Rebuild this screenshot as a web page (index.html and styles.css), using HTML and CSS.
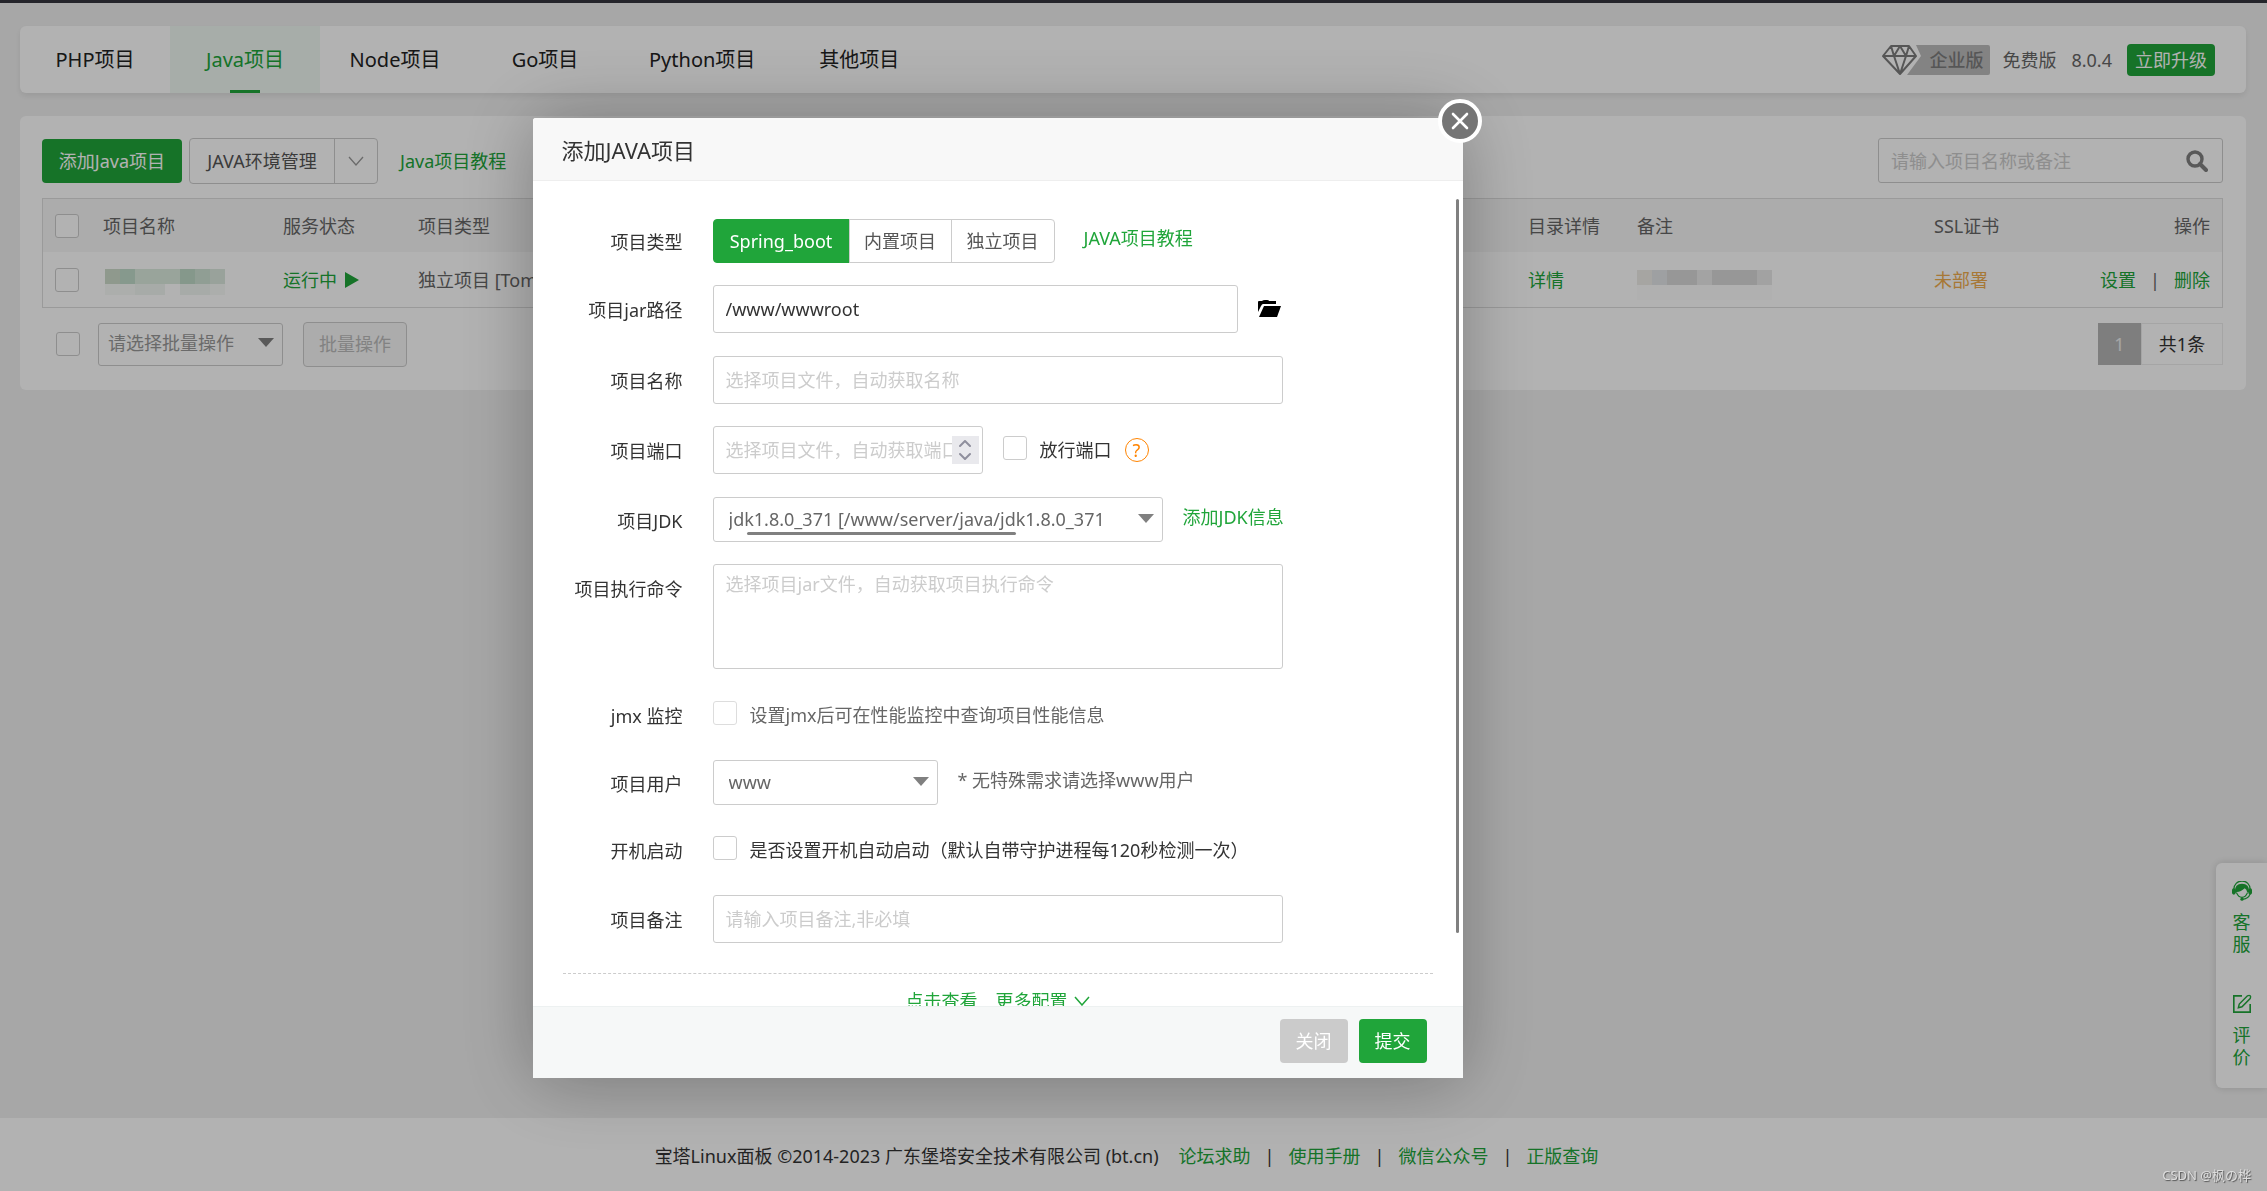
FILE: index.html
```html
<!DOCTYPE html>
<html lang="zh-CN">
<head>
<meta charset="utf-8">
<title>Java项目</title>
<link rel="stylesheet" href="styles.css">
</head>
<body>
<div class="page">
  <header class="tabbar">
    <nav class="tabs">
      <a class="tab" href="#">PHP项目</a>
      <a class="tab tab-active" href="#">Java项目</a>
      <a class="tab" href="#">Node项目</a>
      <a class="tab" href="#">Go项目</a>
      <a class="tab" href="#">Python项目</a>
      <a class="tab" href="#">其他项目</a>
    </nav>
    <div class="version">
      <span class="edition">
        <svg class="edition-shape" viewBox="0 0 110 32" aria-hidden="true">
          <path d="M35 1H107Q109 1 109 3V29Q109 31 107 31H26L40 12Z" fill="#bcbcbc"/>
          <path d="M10 2H28L35 12L19 30L2 12ZM2 12H35M10 2L13 12L19 30L25 12L28 2M13 12L19 2L25 12" fill="none" stroke="#7c7c7c" stroke-width="2" stroke-linejoin="round"/>
        </svg>
        <span class="edition-text">企业版</span>
      </span>
      <span>免费版</span>
      <span>8.0.4</span>
      <button class="btn-upgrade" type="button">立即升级</button>
    </div>
  </header>

  <main class="panel">
    <div class="toolbar">
      <button class="btn btn-green btn-add" type="button">添加Java项目</button>
      <div class="split">
        <button class="split-main" type="button">JAVA环境管理</button>
        <button class="split-arrow" type="button" aria-label="展开">
          <svg width="16" height="10" viewBox="0 0 16 10"><path d="M1 1L8 9L15 1" fill="none" stroke="#999" stroke-width="1.3"/></svg>
        </button>
      </div>
      <a class="link" href="#">Java项目教程</a>
      <div class="search">
        <input type="text" placeholder="请输入项目名称或备注" aria-label="搜索">
        <svg width="22" height="22" viewBox="0 0 22 22" aria-hidden="true"><circle cx="9" cy="9" r="7" fill="none" stroke="#808080" stroke-width="3.4"/><path d="M14 14L20 20" stroke="#808080" stroke-width="4" stroke-linecap="round"/></svg>
      </div>
    </div>

    <table class="projects">
      <colgroup><col class="c-check"><col class="c-name"><col class="c-status"><col class="c-type"><col class="c-dir"><col class="c-note"><col class="c-ssl"><col class="c-op"></colgroup>
      <thead>
        <tr>
          <th><input type="checkbox" aria-label="全选"></th>
          <th>项目名称</th><th>服务状态</th><th>项目类型</th><th>目录详情</th><th>备注</th><th>SSL证书</th><th class="right">操作</th>
        </tr>
      </thead>
      <tbody>
        <tr>
          <td><input type="checkbox" aria-label="选择项目"></td>
          <td><span class="mosaic mosaic-name"></span></td>
          <td><a class="link status" href="#">运行中 <span class="play"></span></a></td>
          <td>独立项目 [Tomcat]</td>
          <td><a class="link" href="#">详情</a></td>
          <td><span class="mosaic mosaic-note"></span></td>
          <td><a class="warn" href="#">未部署</a></td>
          <td class="right"><span class="ops"><a class="link" href="#">设置</a><span>|</span><a class="link" href="#">删除</a></span></td>
        </tr>
      </tbody>
    </table>

    <div class="batch">
      <input type="checkbox" aria-label="批量选择">
      <div class="select-wrap batch-select">
        <select aria-label="批量操作"><option>请选择批量操作</option></select>
      </div>
      <button class="btn-batch" type="button" disabled>批量操作</button>
      <div class="pager"><span class="pager-now">1</span><span class="pager-total">共1条</span></div>
    </div>
  </main>

  <aside class="service">
    <a href="#">
      <svg width="20" height="20" viewBox="0 0 22 22"><path d="M2 9A9 9 0 0 1 20 9" fill="none" stroke="#20a53a" stroke-width="1.4"/><path d="M3 12Q3 3 11 3Q19 3 19 12L17 13Q16 9 14 8Q10 12 5 12V14Z" fill="#20a53a"/><rect x="0" y="8" width="4" height="7" rx="2" fill="#20a53a"/><rect x="18" y="8" width="4" height="7" rx="2" fill="#20a53a"/><path d="M5 13Q7 18 11 18Q15 18 17 13M20 14Q18 20 11 20" fill="none" stroke="#20a53a" stroke-width="1.2"/><circle cx="11" cy="20" r="1.8" fill="#20a53a"/></svg>
      <span>客服</span>
    </a>
    <a href="#">
      <svg width="20" height="20" viewBox="0 0 22 22"><path d="M11 2H2V20H20V11" fill="none" stroke="#20a53a" stroke-width="1.8"/><path d="M7 15L8 11L17 2Q19 1 20 2Q21 3 20 5L11 14Z" fill="none" stroke="#20a53a" stroke-width="1.6"/></svg>
      <span>评价</span>
    </a>
  </aside>

  <footer class="footer">
    <span class="copyright">宝塔Linux面板 ©2014-2023 广东堡塔安全技术有限公司 (bt.cn)</span>
    <a class="link" href="#">论坛求助</a><span>|</span>
    <a class="link" href="#">使用手册</a><span>|</span>
    <a class="link" href="#">微信公众号</a><span>|</span>
    <a class="link" href="#">正版查询</a>
  </footer>
</div>

<div class="shade"></div>

<section class="modal" role="dialog" aria-labelledby="modal-title">
  <h1 class="modal-title" id="modal-title">添加JAVA项目</h1>
  <button class="modal-close" type="button" aria-label="关闭窗口">
    <svg width="18" height="18" viewBox="0 0 18 18"><path d="M2 2L16 16M16 2L2 16" stroke="#fff" stroke-width="2.6" stroke-linecap="round"/></svg>
  </button>
  <form class="modal-body">
    <div class="row">
      <span class="label">项目类型</span>
      <div class="segments">
        <button class="seg seg-on" type="button">Spring_boot</button>
        <button class="seg" type="button">内置项目</button>
        <button class="seg" type="button">独立项目</button>
      </div>
      <a class="link after-segments" href="#">JAVA项目教程</a>
    </div>
    <div class="row row-path">
      <label class="label" for="f-path">项目jar路径</label>
      <input class="field w-path" id="f-path" type="text" value="/www/wwwroot">
      <button class="icon-btn" type="button" aria-label="选择文件">
        <svg width="24" height="18" viewBox="0 0 24 18"><path d="M0 12V2Q0 1 1 1H4Q5 0 7 0H9Q11 0 11 1H18V4H5Q4 4 3 6Z"/><path d="M6 6H23L19 17H1Z"/></svg>
      </button>
    </div>
    <div class="row">
      <label class="label" for="f-name">项目名称</label>
      <input class="field w-full" id="f-name" type="text" placeholder="选择项目文件，自动获取名称">
    </div>
    <div class="row row-port">
      <label class="label" for="f-port">项目端口</label>
      <div class="number">
        <input class="field w-port" id="f-port" type="text" placeholder="选择项目文件，自动获取端口">
        <span class="spinner"><svg width="12" height="20" viewBox="0 0 12 20"><path d="M1 6L6 1L11 6M1 14L6 19L11 14" fill="none" stroke="#8f8f9d" stroke-width="2" stroke-linecap="round" stroke-linejoin="round"/></svg></span>
      </div>
      <label class="check check-port"><input type="checkbox">放行端口</label>
      <span class="help">?</span>
    </div>
    <div class="row">
      <label class="label" for="f-jdk">项目JDK</label>
      <div class="select-wrap w-jdk">
        <select id="f-jdk"><option>jdk1.8.0_371 [/www/server/java/jdk1.8.0_371</option></select>
        <span class="hscroll"></span>
      </div>
      <a class="link after" href="#">添加JDK信息</a>
    </div>
    <div class="row row-cmd">
      <label class="label" for="f-cmd">项目执行命令</label>
      <textarea class="field w-full" id="f-cmd" placeholder="选择项目jar文件，自动获取项目执行命令"></textarea>
    </div>
    <div class="row row-loose row-jmx">
      <span class="label">jmx 监控</span>
      <label class="check muted"><input type="checkbox">设置jmx后可在性能监控中查询项目性能信息</label>
    </div>
    <div class="row row-loose">
      <label class="label" for="f-user">项目用户</label>
      <div class="select-wrap w-user"><select id="f-user"><option>www</option></select></div>
      <span class="after muted">* 无特殊需求请选择www用户</span>
    </div>
    <div class="row row-loose">
      <span class="label">开机启动</span>
      <label class="check"><input type="checkbox">是否设置开机自动启动（默认自带守护进程每120秒检测一次）</label>
    </div>
    <div class="row row-remark">
      <label class="label" for="f-remark">项目备注</label>
      <input class="field w-full" id="f-remark" type="text" placeholder="请输入项目备注,非必填">
    </div>
    <div class="more">
      <a class="link" href="#">点击查看<span class="more-cfg">更多配置</span><svg width="16" height="10" viewBox="0 0 16 10"><path d="M1 1L8 9L15 1" fill="none" stroke="#20a53a" stroke-width="1.5"/></svg></a>
    </div>
    <span class="vscroll"></span>
  </form>
  <div class="modal-foot">
    <button class="btn btn-gray" type="button">关闭</button>
    <button class="btn btn-green" type="button">提交</button>
  </div>
</section>
<span class="watermark">CSDN @枫の桦</span>
</body>
</html>
```

FILE: styles.css
```css
* { box-sizing: border-box; }
html, body { height: 100%; }
body {
  margin: 0;
  overflow: hidden;
  background: #f0f0f0;
  color: #333;
  font: 400 18px/26px "Noto Sans", "Noto Sans CJK SC", sans-serif;
}
a { text-decoration: none; color: inherit; }
button, input, select, textarea { font: inherit; color: inherit; margin: 0; }
button { padding: 0; border: 0; background: none; cursor: pointer; white-space: nowrap; }
svg { display: block; }
input::placeholder, textarea::placeholder { color: #ccc; opacity: 1; }
.link { color: #20a53a; }
.muted { color: #666; }

input[type="checkbox"] {
  appearance: none;
  display: block;
  flex: none;
  width: 24px;
  height: 24px;
  border: 1px solid #ccc;
  border-radius: 3px;
  background: #fff;
}

.page {
  min-height: 100%;
  display: flex;
  flex-direction: column;
  border-top: 3px solid #36363e;
  padding-top: 23px;
}

.tabbar {
  display: flex;
  justify-content: space-between;
  height: 67px;
  margin: 0 21px 23px 20px;
  background: #fff;
  border-radius: 6px;
  box-shadow: 0 3px 6px rgba(0, 0, 0, .08);
}
.tabs { display: flex; color: #222; font-size: 20px; }
.tab {
  min-width: 150px;
  padding: 0 29px;
  line-height: 67px;
  text-align: center;
}
.tab-active {
  color: #20a53a;
  background: linear-gradient(#20a53a, #20a53a) center bottom / 30px 3px no-repeat, #eff8f2;
}
.version { display: flex; align-items: center; gap: 15px; margin-right: 31px; color: #666; }
.edition { position: relative; width: 110px; height: 32px; margin-right: -4px; }
.edition-shape { width: 110px; height: 32px; }
.edition-text { position: absolute; right: 8px; top: 3px; font-weight: 500; color: #7c7c7c; }
.btn-upgrade {
  height: 32px;
  padding: 0 8px;
  border-radius: 4px;
  background: #20a53a;
  color: #fff;
}

.panel {
  margin: 0 21px 0 20px;
  padding: 22px 23px 24px 22px;
  background: #fff;
  border-radius: 6px;
}
.toolbar { display: flex; align-items: center; height: 45px; margin-bottom: 15px; }
.btn { height: 44px; border-radius: 4px; padding: 0 16px; color: #fff; }
.btn-add { width: 140px; padding: 0; }
.btn-green { background: #20a53a; }
.btn-gray { background: #cbcbcb; }
.split {
  display: flex;
  height: 46px;
  margin: 0 22px 0 7px;
  border: 1px solid #ccc;
  border-radius: 4px;
  color: #555;
}
.split-main { width: 144px; }
.split-arrow { width: 43px; border-left: 1px solid #ccc; display: grid; place-items: center; }
.search {
  display: flex;
  align-items: center;
  width: 345px;
  height: 45px;
  margin-left: auto;
  padding: 0 14px 0 12px;
  border: 1px solid #ccc;
  border-radius: 3px;
}
.search input { flex: 1; min-width: 0; border: 0; padding: 0; background: none; outline: 0; }

.projects {
  width: 100%;
  table-layout: fixed;
  border-collapse: separate;
  border-spacing: 0;
  border: 1px solid #ddd;
  color: #666;
}
.c-check { width: 48px; }
.c-name { width: 180px; }
.c-status { width: 135px; }
.c-type { width: auto; }
.c-dir { width: 109px; }
.c-note { width: 297px; }
.c-ssl { width: 130px; }
.c-op { width: 170px; }
.projects th, .projects td { height: 55px; padding: 0 12px; text-align: left; font-weight: inherit; white-space: nowrap; }
.projects th { height: 53px; background: #f6f6f6; }
.projects .right { text-align: right; }
.status { display: flex; align-items: center; gap: 8px; }
.play { border: 8px solid transparent; border-left: 14px solid #20a53a; border-right: 0; }
.warn { color: #f0ad4e; }
.ops { display: inline-flex; gap: 14px; }
.mosaic { display: block; }
.mosaic-name {
  width: 120px;
  height: 26px;
  margin: 5px 0 0 2px;
  background:
    linear-gradient(90deg, #cddccb 0 15px, #c0dccb 15px 30px, #dcebdf 30px 75px, #bfdac8 75px 90px, #cfe2d4 90px 105px, #dbe9df 105px) top / 100% 15px no-repeat,
    linear-gradient(90deg, #f6faf7 0 30px, #eff5f1 30px 60px, #fff 60px 75px, #eff5f1 75px 105px, #f6faf7 105px) bottom / 100% 11px no-repeat;
}
.mosaic-note {
  width: 135px;
  height: 30px;
  margin-top: 10px;
  background:
    linear-gradient(90deg, #eeede8 0 15px, #e2e5e8 15px 30px, #d8d8d8 30px 60px, #eaeaea 60px 75px, #d8d8d8 75px 120px, #e8e8e8 120px) top / 100% 15px no-repeat,
    #fcfcfc;
}

.batch { display: flex; align-items: center; height: 44px; margin-top: 14px; padding-left: 14px; }
.select-wrap { position: relative; flex: none; }
.select-wrap select {
  appearance: none;
  width: 100%;
  height: 100%;
  padding: 0 36px 2px 15px;
  border: 1px solid #ccc;
  border-radius: 3px;
  background: #fff;
  color: #666;
}
.select-wrap::after {
  content: "";
  position: absolute;
  right: 9px;
  top: 50%;
  margin-top: -6px;
  border: 8px solid transparent;
  border-top: 9px solid #808080;
  border-bottom: 0;
}
.batch-select { width: 185px; height: 43px; margin: 0 20px 0 18px; }
.batch-select select { padding-left: 9px; color: #999; }
.btn-batch {
  width: 104px;
  height: 45px;
  border: 1px solid #ccc;
  border-radius: 4px;
  background: #f6f6f6;
  color: #bbb;
}
.pager { display: flex; margin-left: auto; height: 42px; line-height: 40px; color: #333; }
.pager-now { width: 43px; text-align: center; background: #b5b5b5; color: #eee; border: 1px solid #b5b5b5; }
.pager-total { width: 82px; text-align: center; border: 1px solid #ececec; }

.service {
  position: absolute;
  right: 0;
  bottom: 103px;
  width: 51px;
  height: 225px;
  padding-top: 18px;
  display: flex;
  flex-direction: column;
  align-items: center;
  gap: 39px;
  border-radius: 6px 0 0 6px;
  background: #fff;
  color: #20a53a;
  box-shadow: 0 0 8px rgba(0, 0, 0, .15);
}
.service a { display: grid; justify-items: center; gap: 10px; width: 20px; line-height: 22px; text-align: center; }

.footer {
  display: flex;
  justify-content: center;
  align-items: center;
  gap: 14px;
  height: 73px;
  margin-top: auto;
  padding: 2px 14px 0 0;
  background: #fff;
  color: #333;
}
.copyright { margin-right: 6px; }

.shade { position: fixed; inset: 0; background: rgba(0, 0, 0, .3); }

.modal {
  position: fixed;
  left: calc(50% - 601px);
  top: 118px;
  width: 930px;
  border-radius: 3px;
  background: #fff;
  box-shadow: 0 2px 75px rgba(0, 0, 0, .3);
}
.modal-title {
  margin: 0;
  height: 63px;
  padding-left: 29px;
  border-bottom: 1px solid #eee;
  border-radius: 3px 3px 0 0;
  background: #f8f8f8;
  font-size: 22px;
  font-weight: inherit;
  line-height: 64px;
}
.modal-close {
  position: absolute;
  right: -19px;
  top: -19px;
  width: 44px;
  height: 44px;
  display: grid;
  place-items: center;
  border: 4px solid #fff;
  border-radius: 50%;
  background: #757575;
}
.modal-body {
  position: relative;
  height: calc(100vh - 366px);
  padding: 38px 30px 0;
  overflow: hidden;
}
.row { display: flex; align-items: center; margin-bottom: 22px; }
.row-path, .row-port { margin-bottom: 23px; }
.row-loose { margin-bottom: 31px; }
.row-remark { margin-bottom: 30px; }
.label { flex: none; width: 120px; margin-right: 30px; padding-top: 2px; text-align: right; }
.field {
  display: block;
  height: 48px;
  padding: 0 12px;
  border: 1px solid #ccc;
  border-radius: 3px;
  background: #fff;
  outline: 0;
}
.w-full { width: 570px; }
.w-path { width: 525px; }
.w-port { width: 270px; }
.w-jdk { width: 450px; height: 45px; }
.w-user { width: 225px; height: 45px; }
.segments { display: flex; }
.seg { width: 103px; height: 44px; margin-left: -1px; border: 1px solid #ccc; color: #555; }
.seg-on { width: 137px; margin-left: 0; border-color: #20a53a; border-radius: 4px 0 0 4px; background: #20a53a; color: #fff; }
.seg:last-child { width: 104px; border-radius: 0 4px 4px 0; }
.after-segments { margin-left: 29px; padding-bottom: 6px; }
.after { margin-left: 20px; padding-bottom: 5px; }
.icon-btn { margin-left: 20px; }
.number { position: relative; }
.spinner {
  position: absolute;
  right: 4px;
  top: 10px;
  width: 27px;
  height: 28px;
  display: grid;
  place-items: center;
  background: #e9e9ed;
}
.check { display: flex; gap: 13px; line-height: 28px; }
.check-port { margin-left: 20px; }
.help {
  width: 24px;
  height: 24px;
  margin-left: 13px;
  border: 1px solid #ff8400;
  border-radius: 50%;
  color: #ff8400;
  line-height: 22px;
  text-align: center;
}
.hscroll { position: absolute; left: 34px; bottom: 7px; width: 269px; height: 3px; border-radius: 2px; background: #808080; }
.row-cmd { align-items: flex-start; margin-bottom: 32px; }
.row-cmd .label { padding-top: 12px; }
textarea.field { height: 105px; padding: 6px 12px; resize: none; }
.row-jmx input { border-color: #ddd; }
.more { padding-top: 14px; border-top: 1px dashed #ccc; }
.more .link { display: flex; justify-content: center; align-items: center; }
.more-cfg { margin: 0 6px 0 18px; }
.vscroll { position: absolute; right: 4px; top: 18px; bottom: 73px; width: 3px; border-radius: 2px; background: #808080; }
.modal-foot {
  display: flex;
  justify-content: flex-end;
  gap: 11px;
  height: 72px;
  padding: 12px 36px 0;
  border-top: 1px solid #edf1f1;
  background: #f6f8f8;
}
.watermark {
  position: fixed;
  right: 16px;
  bottom: 5px;
  color: #ddd;
  font-size: 13px;
  line-height: 22px;
  text-shadow: 1px 1px 1px #555;
}
```
